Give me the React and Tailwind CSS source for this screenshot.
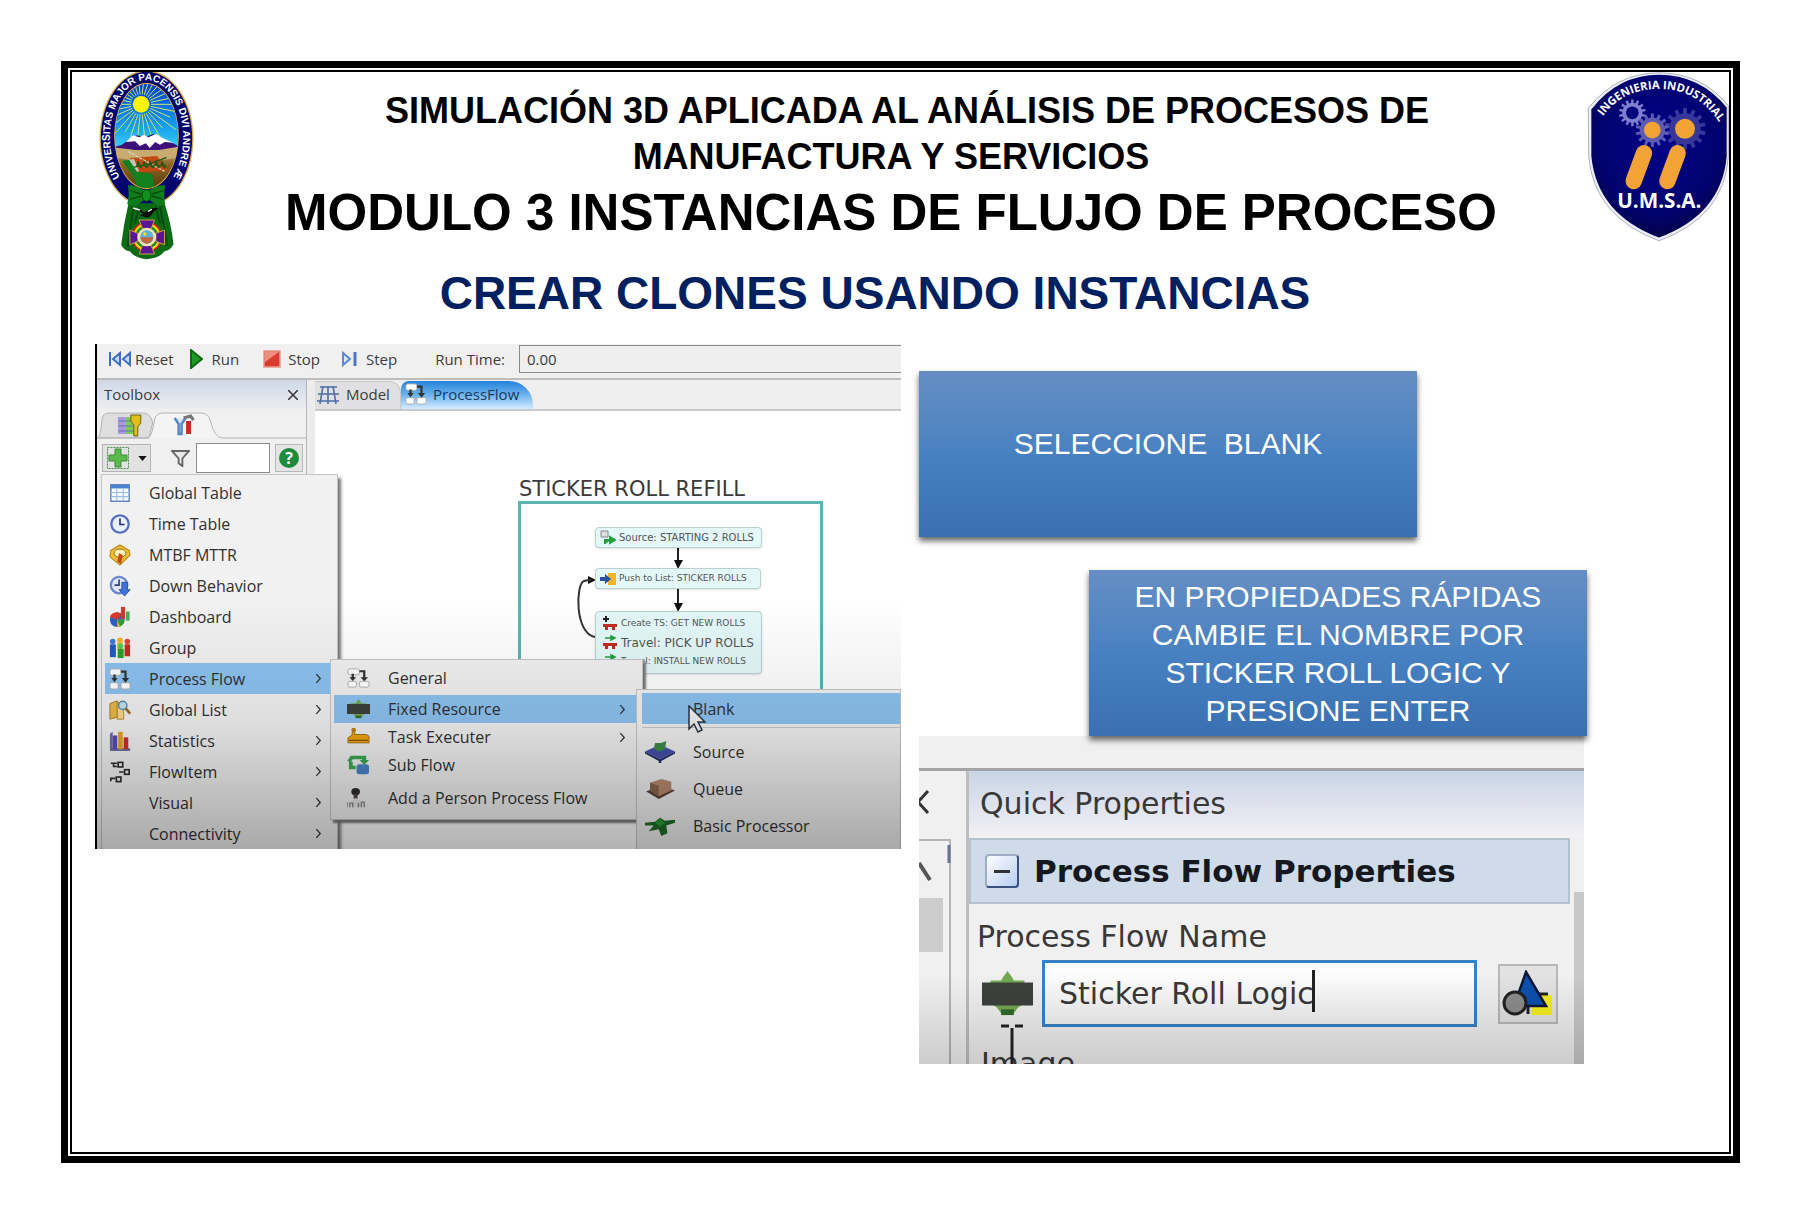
import React from "react";

const uiFont = "font-['Open_Sans','Noto_Sans',sans-serif]";
const tahoma = "font-['DejaVu_Sans',sans-serif]";

/* ---------- logos ---------- */

function UniversityCrest() {
  const rays = Array.from({ length: 30 }, (_, i) => (i * 12 * Math.PI) / 180);
  return (
    <svg viewBox="145 66 290 567" className="h-[189px] w-[97px] shrink-0" role="img" aria-label="Universitas Major Pacensis Divi Andreae">
      <defs>
        <linearGradient id="sky" x1="0" y1="0" x2="0" y2="1">
          <stop offset="0" stopColor="#0038d0" />
          <stop offset="0.7" stopColor="#19a6f0" />
          <stop offset="1" stopColor="#3fd0f5" />
        </linearGradient>
        <linearGradient id="land" x1="0" y1="0" x2="0" y2="1">
          <stop offset="0" stopColor="#d8bd82" />
          <stop offset="0.4" stopColor="#8a6420" />
          <stop offset="1" stopColor="#4c3408" />
        </linearGradient>
        <clipPath id="oval"><ellipse cx="290" cy="258" rx="95" ry="156" /></clipPath>
        <path id="motto" d="M216 390 A110 172 0 1 1 364 390" />
      </defs>
      <ellipse cx="290" cy="265" rx="141" ry="204" fill="#d9b14c" />
      <ellipse cx="290" cy="265" rx="137" ry="200" fill="#04046e" />
      <ellipse cx="290" cy="258" rx="97" ry="159" fill="#e8b83c" />
      <g clipPath="url(#oval)">
        <rect x="190" y="98" width="200" height="200" fill="url(#sky)" />
        <g stroke="#c8e86a" strokeWidth="3">
          {rays.map((a, i) => (
            <line key={i} x1={274 + Math.cos(a) * 30} y1={163 + Math.sin(a) * 30} x2={274 + Math.cos(a) * (i % 2 ? 130 : 95)} y2={163 + Math.sin(a) * (i % 2 ? 130 : 95)} />
          ))}
        </g>
        <circle cx="274" cy="163" r="25" fill="#fff500" />
        <rect x="190" y="288" width="200" height="140" fill="url(#land)" />
        <path d="M190 292 L215 285 L240 268 L262 256 L285 262 L310 252 L345 268 L390 290 L340 298 L290 306 L240 298Z" fill="#3d0f78" />
        <path d="M228 276 L250 256 L268 262 L282 255 L296 262 L318 252 L334 262 L356 272 L372 278 L345 276 L330 284 L316 276 L300 294 L288 280 L270 288 L256 274Z" fill="#fff" />
        <path d="M190 300 H390 V322 Q290 342 190 322Z" fill="#c8ab70" />
        <path d="M240 324 L322 318 L356 362 L262 366Z" fill="#c24a10" />
        <path d="M236 330 L252 326 L268 364 L256 366Z" fill="#c9c4b8" />
        <path d="M234 304 L344 364" stroke="#d8d2c4" strokeWidth="4" strokeDasharray="10 3" />
        <path d="M250 352 Q300 344 350 322" stroke="#1e5a18" strokeWidth="4" fill="none" />
        {[258, 276, 294, 312, 330].map((x) => (
          <path key={x} d={`M${x} 350 l6 -20 l8 14z M${x + 4} 346 l12 10 l4 -10z`} fill="#1e5a18" />
        ))}
        <path d="M216 332 L238 330 L262 366 L308 372 L314 420 L268 420 L246 372Z" fill="#13801f" />
      </g>
      <text className="font-['Liberation_Sans',Arial,sans-serif] font-bold" fontSize="30" fill="#fff">
        <textPath href="#motto" startOffset="50%" textAnchor="middle">UNIVERSITAS MAJOR PACENSIS DIVI ANDRE Æ</textPath>
      </text>
      <path d="M236 460 Q222 520 214 584 Q222 602 240 604 Q252 622 290 628 Q330 624 344 604 Q362 602 371 582 Q364 520 344 460Z" fill="#0c6c16" />
      <path d="M252 470 Q240 530 234 590 M330 470 Q344 530 352 588 M268 470 Q262 500 254 520 M318 470 Q324 500 332 520" stroke="#064a0c" strokeWidth="6" fill="none" />
      <path d="M280 420 Q256 404 234 406 Q240 436 232 462 Q256 474 282 450 H300 Q326 474 346 462 Q340 434 346 406 Q322 404 300 420Z" fill="#0f7d1b" />
      <path d="M240 422 L274 432 M240 448 L274 438 M340 422 L306 432 M340 448 L306 438" stroke="#064a0c" strokeWidth="4" />
      <ellipse cx="290" cy="436" rx="13" ry="18" fill="#12901f" stroke="#064a0c" strokeWidth="3" />
      <path d="M246 472 Q270 476 284 488 Q296 472 328 474 Q312 480 306 494 Q296 506 284 500 L268 496 L280 492 Q266 478 246 472Z" fill="#0a0a0a" />
      <path d="M294 484 l12 -6 M250 474 l20 6" stroke="#fff" strokeWidth="4" />
      <circle cx="291" cy="561" r="46" fill="#e01818" />
      <circle cx="291" cy="561" r="41" fill="#ffe000" />
      <circle cx="291" cy="561" r="35" fill="#1a8a22" />
      <path d="M268 510 H314 L304 536 H278Z M268 612 H314 L304 586 H278Z M240 540 V584 L264 574 V550Z M344 540 V584 L318 574 V550Z" fill="#5a1596" stroke="#c9a040" strokeWidth="3" />
      <circle cx="291" cy="561" r="28" fill="#efe2b8" />
      <circle cx="291" cy="561" r="20" fill="#5ab4d8" />
      <path d="M272 562 H310 Q308 580 291 581 Q274 580 272 562Z" fill="#c0693a" />
      <circle cx="285" cy="552" r="5" fill="#ffe000" />
    </svg>
  );
}

function Gear({ cx, cy, r, color, hole, holeColor }) {
  return (
    <g>
      {Array.from({ length: 14 }, (_, i) => (
        <rect key={i} x={cx - r * 0.09} y={cy - r} width={r * 0.18} height={r * 0.4} fill={color} transform={`rotate(${(i * 360) / 14} ${cx} ${cy})`} />
      ))}
      <circle cx={cx} cy={cy} r={r * 0.76} fill={color} />
      <circle cx={cx} cy={cy} r={hole} fill={holeColor} />
    </g>
  );
}

function EngineeringShield() {
  return (
    <svg viewBox="562 66 426 512" className="h-[171px] w-[142px] shrink-0" role="img" aria-label="Ingeniería Industrial U.M.S.A.">
      <defs>
        <path id="arc" d="M606 204 Q665 116 778 116 Q895 116 962 222" />
        <radialGradient id="shield" cx="0.5" cy="0.4" r="0.65">
          <stop offset="0" stopColor="#020288" />
          <stop offset="0.7" stopColor="#02026e" />
          <stop offset="1" stopColor="#02023c" />
        </radialGradient>
      </defs>
      <path d="M566 174 Q650 68 778 68 Q905 68 986 166 V320 Q974 500 778 572 Q584 500 567 320Z" fill="#eceef8" stroke="#8c90a8" strokeWidth="2" />
      <path d="M575 178 Q655 74 778 74 Q900 74 981 172 V318 Q966 492 778 562 Q592 492 575 318Z" fill="url(#shield)" />
      <text className="font-['Open_Sans','Noto_Sans',sans-serif] font-bold" fontSize="34" fill="#fff">
        <textPath href="#arc" startOffset="50%" textAnchor="middle">INGENIERIA INDUSTRIAL</textPath>
      </text>
      <Gear cx={698} cy={188} r={40} color="#7f7fd0" hole={19} holeColor="#03037c" />
      <Gear cx={856} cy={236} r={62} color="#37379a" hole={30} holeColor="#f2a335" />
      <Gear cx={758} cy={240} r={50} color="#5c5cb4" hole={25} holeColor="#f2a335" />
      <path d="M733 309 L702 393 M834 309 L803 393" stroke="#f2a335" strokeWidth="49" strokeLinecap="round" />
      <text x="779" y="475" textAnchor="middle" className="font-['Open_Sans','Noto_Sans',sans-serif] font-bold" fontSize="62" fill="#fff">U.M.S.A.</text>
    </svg>
  );
}

/* ---------- small icons ---------- */

const shapes = {
  table: (
    <g>
      <rect x="2" y="3" width="20" height="18" fill="#f4f9ff" stroke="#5a7db8" strokeWidth="1.5" />
      <rect x="2" y="3" width="20" height="4" fill="#4d82d0" />
      <path d="M2 11.500H22M2 16H22M8.500 7V21M15.500 7V21" stroke="#9bbce4" strokeWidth="1.200" />
    </g>
  ),
  clock: (
    <g>
      <circle cx="12" cy="12" r="9.500" fill="#e9effc" stroke="#5670c4" strokeWidth="2.500" />
      <path d="M12 6v6.500h5" stroke="#26306a" strokeWidth="1.800" fill="none" />
    </g>
  ),
  mtbf: (
    <g>
      <path d="M12 1 L22 7 L23 12 L12 23 L1 14 L2 7Z" fill="#f0be30" stroke="#b88818" strokeWidth="1.200" />
      <ellipse cx="12" cy="10" rx="6.500" ry="4.500" fill="#fbf0b8" stroke="#8d6c1c" />
      <path d="M11 10 L15 12 L13 22 L9 19Z" fill="#c04b18" />
    </g>
  ),
  down: (
    <g>
      <circle cx="11" cy="11" r="9" fill="#dde6fa" stroke="#6a86cc" strokeWidth="2.500" />
      <path d="M11 5v6H6" stroke="#33437c" strokeWidth="1.800" fill="none" />
      <path d="M14 8 H20 V16 H23 L17 23 L11 16 H14Z" fill="#3f74d8" stroke="#2850a8" />
    </g>
  ),
  dashboard: (
    <g>
      <circle cx="9" cy="15" r="8" fill="#2f5fc4" />
      <path d="M9 15 L1 12 A8 8 0 0 1 14 9Z" fill="#d83a2a" />
      <path d="M9 15 L9 23 A8 8 0 0 0 17 15Z" fill="#e8c21c" />
      <path d="M9 15 L17 15 A8 8 0 0 1 12 22Z" fill="#2e9a3a" />
      <rect x="13" y="1" width="4.500" height="13" fill="#d23a28" />
      <rect x="18.500" y="6" width="4" height="10" fill="#4faa58" />
    </g>
  ),
  group: (
    <g>
      <circle cx="12" cy="3.500" r="3" fill="#f0b020" />
      <rect x="9" y="6" width="6" height="8" fill="#f0b020" />
      <circle cx="4" cy="5" r="3" fill="#3c78e0" />
      <rect x="1" y="8" width="6.500" height="14" fill="#2459c0" />
      <circle cx="20" cy="5" r="3" fill="#e04038" />
      <rect x="17" y="8" width="6" height="13" fill="#c42a24" />
      <circle cx="12.500" cy="10" r="3" fill="#50cc50" />
      <rect x="9.500" y="13" width="6.500" height="10" fill="#28a028" />
    </g>
  ),
  flow: (
    <g>
      <rect x="1" y="1" width="12" height="7" rx="2" fill="#fff" stroke="#a8adb0" />
      <rect x="1" y="16" width="9" height="7" rx="2" fill="#fff" stroke="#a8adb0" />
      <rect x="13" y="16" width="10" height="7" rx="2" fill="#fff" stroke="#a8adb0" />
      <path d="M6 7 V13 M13 4 H18 V12" stroke="#333" strokeWidth="2.400" fill="none" />
      <path d="M2.500 11 H9.500 L6 15.500Z M14 11 H22 L18 16Z" fill="#333" />
    </g>
  ),
  list: (
    <g>
      <path d="M1 5 L9 2 V20 L1 22Z" fill="#e8b848" stroke="#a47a20" />
      <rect x="9" y="4" width="7" height="18" fill="#f6d888" stroke="#b48c30" />
      <circle cx="15" cy="7" r="4.500" fill="#bfe4f6" stroke="#5a88b0" strokeWidth="1.600" />
      <path d="M18 10 L23 16" stroke="#a06a28" strokeWidth="3" />
    </g>
  ),
  stats: (
    <g>
      <path d="M1 4 L4 2 V20 H23 V23 H1Z" fill="#6a6ea8" />
      <rect x="4" y="6" width="5" height="15" fill="#5a48b8" />
      <rect x="10" y="2" width="5" height="19" fill="#e8a020" />
      <rect x="16" y="8" width="5" height="13" fill="#d02c20" />
    </g>
  ),
  item: (
    <g fill="none" stroke="#2d2d2d" strokeWidth="1.800">
      <path d="M2 2.500 H9 M5 2 V6 H9 M11 12 H16 M2 22 V19 H7" />
      <rect x="10" y="1.500" width="5" height="5" />
      <rect x="17" y="9.500" width="5" height="5" />
      <rect x="8" y="17.500" width="5" height="5" />
    </g>
  ),
  fixed: (
    <g>
      <path d="M12 0 L14 3 L15 5 H20 V17 L17 19 L15 22 H9 L7 19 L4 17 V5 H9 L10 3Z" fill="#74a850" />
      <path d="M9 20 H15 V23 H9Z" fill="#2f6a2a" />
      <rect x="0" y="6" width="24" height="12" fill="#3d413d" />
    </g>
  ),
  vehicle: (
    <g>
      <path d="M6 3 H8 V9 H20 Q24 10 23 15 L23 19 H1 V13 L5 10Z" fill="#f0a516" stroke="#a0680a" />
      <circle cx="7" cy="3.500" r="2.500" fill="#c08018" />
      <path d="M2 16H22" stroke="#8c5a08" strokeWidth="1.500" />
    </g>
  ),
  sub: (
    <g>
      <path d="M18 7 V3 H5 L2 8 M4 8 V15 H9" fill="none" stroke="#3aa850" strokeWidth="4" />
      <path d="M13 6 H23 L18 12Z" fill="#3aa850" />
      <rect x="10" y="11" width="13" height="12" rx="3" fill="#4a84c8" />
    </g>
  ),
  person: (
    <g>
      <ellipse cx="9" cy="4.500" rx="4.500" ry="4.500" fill="#2e2c2c" />
      <rect x="7" y="7" width="4" height="6" fill="#4a4440" />
      <path d="M5 23 V15 L9 12 L14 15 V23Z" fill="#e4e4e4" />
      <path d="M0 23 V17 M3 23 V18 H6 V23 M12 23 V18 M15 23 V17 H18 V23" fill="none" stroke="#8a8a8a" strokeWidth="1.500" />
    </g>
  ),
  source: (
    <g>
      <path d="M0 12 L12 5 L24 12 L12 20Z" fill="#4450a8" />
      <path d="M0 12 L12 20 L24 12 V14 L13 22 V24 H11 V22 L0 14Z" fill="#252c66" />
      <path d="M7 9 L8 3 L13 3 L17 1 L16 10 L11 12Z" fill="#3f8c4a" />
    </g>
  ),
  queue: (
    <g>
      <path d="M1 15 L12 9 L24 14 L11 23Z" fill="#5c4032" />
      <path d="M4 6 L13 2 L21 5 V14 L11 20 L4 14Z" fill="#b98a70" />
      <path d="M4 6 L11 9 V20 L4 14Z" fill="#8c6450" />
    </g>
  ),
  processor: (
    <g>
      <path d="M0 9 L8 8 L12 4 L16 7 L24 6 V9 L17 12 L18 20 L13 23 L11 16 L3 18 L7 12 L0 12Z" fill="#206c28" />
      <path d="M8 9 L12 5 L16 9 L12 13Z" fill="#2e9a38" />
    </g>
  ),
};

function Icon({ name, className = "size-[22px]" }) {
  return (
    <svg viewBox="0 0 24 24" preserveAspectRatio="none" className={`shrink-0 ${className}`} aria-hidden="true">
      {shapes[name]}
    </svg>
  );
}

function Chevron() {
  return (
    <svg viewBox="0 0 8 12" className="ml-auto h-[11px] w-[7px]" aria-hidden="true">
      <path d="M1.500 1 L6 6 L1.500 11" fill="none" stroke="#333" strokeWidth="1.500" />
    </svg>
  );
}

/* ---------- simulator window ---------- */

function ToolbarButton({ label, children, className = "" }) {
  return (
    <button type="button" className={`flex items-center ${className}`}>
      {children}
      {label}
    </button>
  );
}

function Toolbar() {
  return (
    <div className="flex h-[36px] items-center border-b-2 border-[#bdbdbd] bg-[#f1f0f0] pb-1 pl-[11px] text-[15px] text-[#3c3c3c]">
      <ToolbarButton label="Reset" className="gap-[3px]">
        <svg viewBox="0 0 24 16" className="h-4 w-6">
          <path d="M2 1V15 M12 2 L5 8 L12 14Z M22 2 L15 8 L22 14Z" fill="#c8dcf6" stroke="#3f6fc0" strokeWidth="2" />
        </svg>
      </ToolbarButton>
      <ToolbarButton label="Run" className="ml-4 gap-[9px]">
        <svg viewBox="0 0 13 20" className="h-5 w-[13px]">
          <path d="M1 1 L12 10 L1 19Z" fill="#1e9a24" stroke="#0e6a14" strokeWidth="2" />
        </svg>
      </ToolbarButton>
      <ToolbarButton label="Stop" className="ml-6 gap-[7px]">
        <svg viewBox="0 0 18 18" className="size-[18px]">
          <rect x="1" y="1" width="16" height="16" fill="#d83c30" stroke="#e89a90" strokeWidth="1.500" />
          <path d="M2 2H16L2 12Z" fill="#ee8c80" />
        </svg>
      </ToolbarButton>
      <ToolbarButton label="Step" className="ml-5 gap-2">
        <svg viewBox="0 0 18 18" className="size-[18px]">
          <path d="M3 3 L10 9 L3 15Z" fill="#dce8fa" stroke="#5c88d0" strokeWidth="2" />
          <path d="M15 2V16" stroke="#4a78c8" strokeWidth="3" />
        </svg>
      </ToolbarButton>
      <label htmlFor="run-time" className="ml-auto pl-3 whitespace-nowrap">Run Time:</label>
      <input id="run-time" defaultValue="0.00" className="ml-[14px] h-[28px] w-[382px] border border-r-0 border-[#8a8a8a] bg-[#efefef] px-[7px] outline-none" />
    </div>
  );
}

function Toolbox() {
  return (
    <div className="w-[210px] shrink-0 border-r border-[#b5b5b5] bg-[#f0f0f0] text-[15px] text-[#3c3c3c]">
      <div className="flex h-[31px] items-center justify-between bg-linear-to-b from-[#cfd8e8] to-[#efeff2] pr-2 pb-[2px] pl-[7px]">
        <span>Toolbox</span>
        <button type="button" aria-label="Close toolbox">
          <svg viewBox="0 0 10 10" className="size-[10px]"><path d="M0 0L10 10M10 0L0 10" stroke="#333" strokeWidth="1.500" /></svg>
        </button>
      </div>
      <svg viewBox="0 0 210 28" className="h-7 w-full" preserveAspectRatio="none" aria-hidden="true">
        <path d="M0 27 Q4 26 5 8 Q6 2 12 2 H46 Q54 2 56 12 L52 27Z" fill="#dedede" stroke="#b4b4b4" />
        <path d="M0 27 H52 Q56 22 58 8 Q60 2 66 2 H104 Q112 2 114 10 Q118 27 126 27 H210" fill="#f4f4f4" stroke="#b4b4b4" />
        <path d="M21 6 H29 V23 H21Z" fill="#a898e0" />
        <path d="M29 6 H37 V23 H29Z" fill="#7ccc50" />
        <path d="M22 10H37M22 15H37M22 20H37" stroke="#6a70b0" strokeWidth="1" />
        <path d="M34 4 H44 V12 L41 16 V25 H37 V14 L34 10Z" fill="#e0c018" stroke="#6c6018" />
        <path d="M78 7 L82 13 V23 H85 V13 L89 7" stroke="#5a86c4" strokeWidth="2.500" fill="#dce8f8" />
        <path d="M87 7 L94 5 L97 9" stroke="#777" strokeWidth="3" fill="none" />
        <path d="M92 10 V23" stroke="#c82c24" strokeWidth="5" />
      </svg>
      <div className="flex h-[38px] items-center pr-[3px] pl-[5px]">
        <button type="button" aria-label="Add tool" className="flex h-[28px] w-[49px] items-center justify-center gap-[9px] border border-[#b4b4b4] bg-[#e2e2e2]">
          <svg viewBox="0 0 22 22" className="size-[22px]">
            <rect x="0.500" y="0.500" width="21" height="21" fill="none" stroke="#4e8a4e" strokeDasharray="2 1" />
            <path d="M8 2H14V8H20V14H14V20H8V14H2V8H8Z" fill="#5cba4c" stroke="#3c8a34" />
          </svg>
          <svg viewBox="0 0 10 6" className="h-[5px] w-[9px]"><path d="M0 0H10L5 6Z" fill="#111" /></svg>
        </button>
        <svg viewBox="0 0 20 18" className="ml-[20px] h-[17px] w-[19px]" aria-hidden="true">
          <path d="M1 1H19L12 9V17L8 14V9Z" fill="#e8e8e8" stroke="#666" strokeWidth="2" />
        </svg>
        <input aria-label="Filter tools" className="ml-[6px] h-[30px] w-[74px] border border-[#8c8c8c] bg-white outline-none" />
        <button type="button" aria-label="Help" className="ml-auto flex size-[28px] items-center justify-center border border-[#b8b8b8] bg-[#e4e4e4]">
          <span className="flex size-5 items-center justify-center rounded-full bg-[#1e8c3c] text-base font-bold text-white">?</span>
        </button>
      </div>
    </div>
  );
}

function ViewTabs() {
  return (
    <div className="flex h-[31px] items-end border-b-2 border-[#cacaca] bg-[#efefef] text-[15px] text-[#3c3c3c]">
      <button type="button" className="flex h-[28px] w-[86px] items-center gap-[7px] rounded-tr-xl border-t border-r border-[#c6c6c6] bg-[#e0e0e2] pb-[2px] pl-[2px]">
        <svg viewBox="0 0 22 18" className="h-[18px] w-[22px]" aria-hidden="true">
          <path d="M3 1H20M1 8H22M0 15H22M6 0L3 18M11 0V18M16 0L19 18" stroke="#4f6ca8" strokeWidth="1.600" />
        </svg>
        Model
      </button>
      <button type="button" className="flex h-[28px] w-[132px] items-center gap-[6px] rounded-tl-lg rounded-tr-3xl bg-linear-to-b from-[#1f83da] via-[#6db2ee] to-[#d4ecff] pb-[2px] pl-[4px] text-[#173a5c]">
        <Icon name="flow" />
        ProcessFlow
      </button>
    </div>
  );
}

function NodeLine({ icon, text, className = "text-[10px]" }) {
  return (
    <div className={`flex h-[19px] items-center gap-[3px] whitespace-nowrap text-[#555] ${className}`}>
      {icon}
      {text}
    </div>
  );
}

const Cart = ({ mark }) => (
  <svg viewBox="0 0 16 16" className="size-4 shrink-0" aria-hidden="true">
    {mark === "plus" ? <path d="M4 0V6M1 3H7" stroke="#222" strokeWidth="2" /> : <path d="M3 3H10M9 1L13 3L9 5Z" stroke="#1fa040" strokeWidth="1.500" fill="#1fa040" />}
    <path d="M1 8H15V11H13V14H10V11H6V14H3V11H1Z" fill="#c22a22" />
  </svg>
);

const nodeBox = "absolute rounded border border-[#bcd0d0] bg-[#e4f8f9] shadow-sm";

function FlowCanvas() {
  return (
    <div className={`relative flex-1 overflow-hidden bg-white ${tahoma}`}>
      <h3 className="absolute top-[64px] left-[204px] text-[21px] leading-7 whitespace-nowrap text-[#3a3a3a]">STICKER ROLL REFILL</h3>
      <div className="absolute top-[90px] left-[203px] h-[250px] w-[305px] border-[3px] border-[#5bb5b0]" />
      <svg viewBox="3 0 590 300" className="absolute top-0 left-0 h-[300px] w-[590px]" aria-hidden="true">
        <path d="M366 137V154M366 178V198" stroke="#222" strokeWidth="2" />
        <path d="M362 149H371L366 158Z M362 192H371L366 201Z M276 165L284 169L276 173Z" fill="#111" />
        <path d="M283 226 C262 222 264 172 272 170 Q275 169 279 169" fill="none" stroke="#333" strokeWidth="2" />
      </svg>
      <div className={`${nodeBox} top-[116px] left-[280px] w-[167px] pl-1`}>
        <NodeLine text="Source: STARTING 2 ROLLS" icon={
          <svg viewBox="0 0 16 16" className="size-4 shrink-0"><path d="M1 1H8V7H1Z" fill="#ddd" stroke="#888" /><path d="M5 14V10H11M10 7L15 10L10 13Z" stroke="#22a03c" strokeWidth="2" fill="#22a03c" /></svg>
        } />
      </div>
      <div className={`${nodeBox} top-[157px] left-[280px] w-[166px] pl-1`}>
        <NodeLine text="Push to List: STICKER ROLLS" className="text-[9px]" icon={
          <svg viewBox="0 0 16 16" className="size-4 shrink-0"><rect x="8" y="2" width="8" height="12" fill="#f0b428" /><path d="M0 6H5V3L11 8L5 13V10H0Z" fill="#24509c" /></svg>
        } />
      </div>
      <div className={`${nodeBox} top-[200px] left-[280px] w-[167px] py-[2px] pl-[6px]`}>
        <NodeLine text="Create TS: GET NEW ROLLS" className="text-[9px]" icon={<Cart mark="plus" />} />
        <NodeLine text="Travel: PICK UP ROLLS" className="text-[12px]" icon={<Cart />} />
        <NodeLine text="Travel: INSTALL NEW ROLLS" className="text-[9px]" icon={<Cart />} />
      </div>
    </div>
  );
}

function MenuItem({ icon, label, more, active, className = "", iconClass }) {
  return (
    <button type="button" role="menuitem" className={`flex w-full items-center text-left whitespace-nowrap ${active ? "bg-[#8cc2f0]" : ""} ${className}`}>
      {icon ? <Icon name={icon} className={iconClass} /> : <span className={`shrink-0 ${iconClass}`} />}
      <span>{label}</span>
      {more && <Chevron />}
    </button>
  );
}

const toolMenu = [
  ["table", "Global Table"],
  ["clock", "Time Table"],
  ["mtbf", "MTBF MTTR"],
  ["down", "Down Behavior"],
  ["dashboard", "Dashboard"],
  ["group", "Group"],
  ["flow", "Process Flow", true, true],
  ["list", "Global List", true],
  ["stats", "Statistics", true],
  ["item", "FlowItem", true],
  [null, "Visual", true],
  [null, "Connectivity", true],
];

const flowMenu = [
  ["flow", "General", false, false, "h-[35px]"],
  ["fixed", "Fixed Resource", true, true, "h-[28px]"],
  ["vehicle", "Task Executer", true, false, "h-[28px]"],
  ["sub", "Sub Flow", false, false, "h-[28px]"],
  ["person", "Add a Person Process Flow", false, false, "h-[38px]"],
];

const objectMenu = [
  ["source", "Source"],
  ["queue", "Queue"],
  ["processor", "Basic Processor"],
];

const menuBox = "absolute border border-[#c4c4c4] bg-[#f1f1f1] text-[16px] text-[#303030]";

function SimulatorWindow() {
  return (
    <section aria-label="Simulator" className={`relative flex aspect-[806/505] flex-col overflow-hidden border-l-2 border-black ${uiFont}`}>
      <Toolbar />
      <div className="flex flex-1">
        <Toolbox />
        <div className="flex flex-1 flex-col border-l-[8px] border-[#ececec]">
          <ViewTabs />
          <FlowCanvas />
        </div>
      </div>

      <div role="menu" className={`${menuBox} top-[130px] left-[4px] w-[237px] py-[2px] pr-[6px] pl-[3px] shadow-[3px_4px_3px_#777]`}>
        {toolMenu.map(([icon, label, more, active]) => (
          <MenuItem key={label} icon={icon} label={label} more={more} active={active} className="h-[31px] gap-[18px] pr-[9px] pl-1" iconClass="size-[22px]" />
        ))}
      </div>

      <div role="menu" className={`${menuBox} top-[315px] left-[233px] w-[313px] pr-[6px] pb-[2px] pl-[3px] shadow-[3px_3px_2px_#777]`}>
        {flowMenu.map(([icon, label, more, active, height]) => (
          <MenuItem key={label} icon={icon} label={label} more={more} active={active} className={`gap-[18px] pr-[10px] pl-[13px] ${height}`} iconClass="h-[20px] w-[23px]" />
        ))}
      </div>

      <div role="menu" className={`${menuBox} top-[345px] right-0 w-[265px] pt-[3px] pb-3 pl-[5px]`}>
        <MenuItem label="Blank" active className="h-[31px] gap-[18px] pl-1" iconClass="w-[29px]" />
        <div className="mt-[3px] mb-[5px] h-px bg-[#c8c8c8]" />
        {objectMenu.map(([icon, label]) => (
          <MenuItem key={label} icon={icon} label={label} className="h-[37px] gap-[18px] pl-[3px]" iconClass="h-[23px] w-[30px]" />
        ))}
      </div>

      <svg viewBox="0 0 18 28" className="absolute top-[361px] left-[591px] h-7 w-[18px]" aria-hidden="true">
        <path d="M1 1V24L6 19L10 27L14 25L10 17H17Z" fill="#f2f2f2" stroke="#2a3540" strokeWidth="1.500" />
      </svg>
      <div className="pointer-events-none absolute inset-x-0 bottom-0 h-1/2 bg-linear-to-b from-transparent via-black/8 to-black/30" />
    </section>
  );
}

/* ---------- quick properties ---------- */

function QuickProperties() {
  return (
    <section aria-label="Quick Properties" className={`relative mr-[3px] h-[328px] overflow-hidden bg-[#f0f0f0] text-[30px] text-[#383838] ${tahoma}`}>
      <div className="h-[35px] border-b-[3px] border-[#a4a4a4]" />
      <div className="flex h-[293px]">
        <div className="w-[47px] shrink-0">
          <svg viewBox="0 0 47 293" className="h-full w-full" aria-hidden="true">
            <path d="M9 20L-1 31L9 42" fill="none" stroke="#333" strokeWidth="3" />
            <path d="M0 69H31V293" fill="none" stroke="#b4b4b4" strokeWidth="2" />
            <path d="M30 74V92" stroke="#6a7090" strokeWidth="3" />
            <path d="M0 92L11 109" fill="none" stroke="#555" strokeWidth="4" />
            <rect x="0" y="127" width="24" height="54" fill="#cdcdcd" />
          </svg>
        </div>
        <div className="relative min-w-0 flex-1 border-l-[3px] border-[#bdbdbd]">
          <h3 className="h-[67px] bg-linear-to-b from-[#c9d5e4] via-[#dfe2ee] to-[#f2f1f4] pl-[11px] leading-[66px]">Quick Properties</h3>
          <div className="mr-[14px] flex h-[66px] items-center gap-[15px] border-2 border-[#b4c2d0] bg-[#cfdbe8] pl-[14px]">
            <button type="button" aria-label="Collapse section" className="flex size-[34px] shrink-0 items-center justify-center rounded-sm border-2 border-r-[#3c5080] border-b-[#3c5080] border-t-[#9eacc4] border-l-[#9eacc4] bg-linear-to-br from-white to-[#b8cdf0]">
              <span className="h-[3px] w-4 bg-[#333]" />
            </button>
            <h4 className="text-[31px] font-bold whitespace-nowrap text-[#15181e]">Process Flow Properties</h4>
          </div>
          <label htmlFor="flow-name" className="block h-[56px] pl-2 leading-[66px]">Process Flow Name</label>
          <div className="flex items-center pr-[26px] pl-[13px]">
            <Icon name="fixed" className="h-[46px] w-[51px]" />
            <div className="relative ml-[9px] min-w-0 flex-1">
              <input id="flow-name" defaultValue="Sticker Roll Logic" className="h-[67px] w-full border-[3px] border-[#3a80c6] bg-linear-to-b from-white to-[#f3f3f3] pl-[14px] outline-none" />
              <span className="absolute top-[10px] left-[270px] h-[42px] w-[3px] bg-[#222]" />
            </div>
            <button type="button" aria-label="Edit shape" className="ml-[21px] flex size-[60px] shrink-0 items-center justify-center border-2 border-[#b8b8b8] bg-[#e2e2e2]">
              <svg viewBox="0 0 52 48" className="h-12 w-[52px]">
                <rect x="30" y="25" width="20" height="20" fill="#f4ee20" />
                <path d="M26 26V44M30 24H46" stroke="#222" strokeWidth="3" />
                <path d="M24 2L44 36H12Z" fill="#0d4fb0" stroke="#0c1838" strokeWidth="2.500" />
                <circle cx="13" cy="33" r="11" fill="#8c8c8c" stroke="#222" strokeWidth="3" />
              </svg>
            </button>
          </div>
          <p className="pl-3 leading-[74px]">Image</p>
          <div className="absolute right-0 bottom-0 h-[172px] w-[10px] bg-[#c8c8c8]" />
        </div>
      </div>
      <svg viewBox="0 0 24 42" className="absolute bottom-[-2px] left-[81px] h-[42px] w-6" aria-hidden="true">
        <path d="M1 2H9M15 2H23M12 4V42" stroke="#222" strokeWidth="3" />
      </svg>
      <div className="pointer-events-none absolute inset-x-0 bottom-0 h-[180px] bg-linear-to-b from-transparent via-transparent to-black/15" />
    </section>
  );
}

/* ---------- slide ---------- */

function Callout({ children, className = "" }) {
  return (
    <div className={`flex min-h-[166px] w-[498px] max-w-full items-center justify-center bg-linear-to-b from-[#668ec4] via-[#4881c1] to-[#3870b2] px-6 text-center text-[30px] leading-[38px] text-white shadow-[0_4px_6px_rgba(0,0,0,0.6)] ${className}`}>
      <p className="whitespace-pre-wrap">{children}</p>
    </div>
  );
}

export default function App() {
  return (
    <main className="flex min-h-screen bg-white pt-[61px] pr-[60px] pb-[60px] pl-[61px] font-['Liberation_Sans',Arial,sans-serif] text-black">
      <div className="flex flex-1 border-[7px] border-black p-[2px]">
        <article className="flex-1 border-2 border-black">
          <header className="flex items-start pl-[26px]">
            <UniversityCrest />
            <div className="flex-1 pt-[16px] text-center font-bold">
              <p className="pl-8 text-[36px] leading-[46px]">SIMULACIÓN 3D APLICADA AL ANÁLISIS DE PROCESOS DE</p>
              <p className="text-[36px] leading-[46px]">MANUFACTURA Y SERVICIOS</p>
              <h1 className="text-[51px] leading-[66px]">MODULO 3 INSTANCIAS DE FLUJO DE PROCESO</h1>
              <h2 className="mt-[17px] pr-8 text-[46px] leading-[60px] text-[#002060]">CREAR CLONES USANDO INSTANCIAS</h2>
            </div>
            <EngineeringShield />
          </header>
          <div className="mt-[21px] grid grid-cols-[806fr_668fr] items-start gap-[18px] pr-[142px] pl-[23px]">
            <SimulatorWindow />
            <div className="pt-[27px]">
              <Callout className="pb-[20px]">{"SELECCIONE  BLANK"}</Callout>
              <Callout className="relative z-10 mt-[33px] ml-auto pt-[2px]">EN PROPIEDADES RÁPIDAS CAMBIE EL NOMBRE POR STICKER ROLL LOGIC Y PRESIONE ENTER</Callout>
              <QuickProperties />
            </div>
          </div>
        </article>
      </div>
    </main>
  );
}
